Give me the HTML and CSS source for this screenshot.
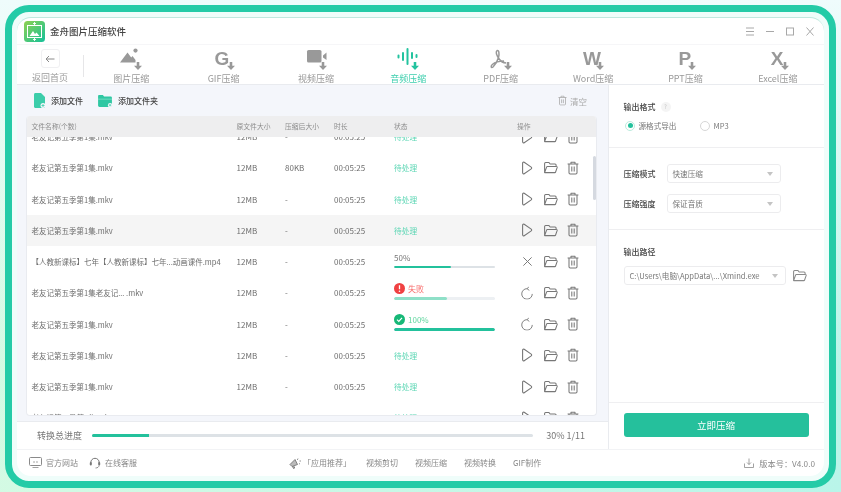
FILE: index.html
```html
<!DOCTYPE html>
<html lang="zh-CN">
<head>
<meta charset="utf-8">
<title>金舟图片压缩软件</title>
<link rel="stylesheet" href="styles.css">
</head>
<body>
<svg class="defs" width="0" height="0">
  <symbol id="arrow" viewBox="0 0 10 10"><path d="M3.4 0h3.2v4.6H10L5 10 0 4.6h3.4z"/></symbol>
  <symbol id="play" viewBox="0 0 12 14"><path d="M1.6 2.2c0-.9.9-1.4 1.6-.9l7 4.8c.6.4.6 1.3 0 1.8l-7 4.8c-.7.5-1.6 0-1.6-.9z" fill="none" stroke="currentColor" stroke-width="1.1"/></symbol>
  <symbol id="folder" viewBox="0 0 15 13"><path d="M1.6 11.6V2.4c0-.6.4-1 1-1h3.2l1.3 1.6h5c.6 0 1 .4 1 1v1.4M1.6 11.6h10.2c.4 0 .7-.2.8-.6l1.6-4.6c.1-.5-.2-.9-.7-.9H4.4c-.4 0-.7.2-.8.6z" fill="none" stroke="currentColor" stroke-width="1.05" stroke-linejoin="round"/></symbol>
  <symbol id="trash" viewBox="0 0 12 14"><path d="M.6 3h10.8M4 3V1.2h4V3M2 3v8.8c0 .7.5 1.2 1.2 1.2h5.600c.7 0 1.200-.5 1.200-1.200V3M4.800 5.500v5M7.200 5.500v5" fill="none" stroke="currentColor" stroke-width="1.05" stroke-linejoin="round"/></symbol>
  <symbol id="retry" viewBox="0 0 13 14"><path d="M6.500 2.300a5.700 5.700 0 1 0 5.700 5.700M6.500 2.300 8.600.3M6.500 2.300l2.500 1.900" fill="none" stroke="currentColor" stroke-width="1"/></symbol>
  <symbol id="cross" viewBox="0 0 12 12"><path d="M1.500 1.500l9 9M10.500 1.500l-9 9" fill="none" stroke="currentColor" stroke-width="1.05"/></symbol>
</svg>

<div class="frame">
<div class="window">

  <header class="titlebar">
    <svg class="logo" viewBox="0 0 21 21"><defs><linearGradient id="lg" x1="0" y1="0" x2="1" y2="1"><stop offset="0" stop-color="#8fd14f"/><stop offset="1" stop-color="#14c19b"/></linearGradient></defs><rect width="21" height="21" rx="3.500" fill="url(#lg)"/><rect x="3.500" y="4.500" width="14" height="12" fill="none" stroke="#fff" stroke-width="1"/><path d="M5.500 15l3.500-5 2 3 1.500-1.500L15.500 15z" fill="#fff"/><path d="M10.500 1v3M10.500 17v3M9 2.500h3M9 18.500h3" stroke="#fff" stroke-width=".9"/></svg>
    <span class="app-name">金舟图片压缩软件</span>
    <div class="win-ctrls">
      <svg width="10" height="9" viewBox="0 0 10 9"><path d="M1 1h8M1 4.500h8M1 8h8" stroke="#a8a8a8" fill="none"/></svg>
      <svg width="10" height="9" viewBox="0 0 10 9"><path d="M1 4.500h8" stroke="#a8a8a8" fill="none"/></svg>
      <svg width="10" height="9" viewBox="0 0 10 9"><rect x="1.500" y="1" width="7" height="7" stroke="#a8a8a8" fill="none"/></svg>
      <svg width="10" height="9" viewBox="0 0 10 9"><path d="M1.500 .5l7 8M8.500 .5l-7 8" stroke="#a8a8a8" fill="none"/></svg>
    </div>
  </header>

  <nav class="navbar">
    <div class="back">
      <span class="back-btn"><svg width="10" height="8" viewBox="0 0 10 8"><path d="M9.500 4H1M4 1 1 4l3 3" stroke="#8a8a8a" fill="none"/></svg></span>
      <span class="back-label">返回首页</span>
    </div>
    <i class="nav-divider"></i>
    <div class="tabs">
      <div class="tab">
        <span class="tab-icon"><svg class="glyph" width="24" height="22" viewBox="0 0 24 22"><circle cx="16.500" cy="2.600" r="2.100"/><path d="M1 14.500 8.500 4.500l3.700 5 1.300-1.600 3 4.100v2.500z"/></svg><svg class="tab-arrow" viewBox="0 0 10 10"><use href="#arrow"/></svg></span>
        <span>图片压缩</span>
      </div>
      <div class="tab">
        <span class="tab-icon"><span class="letter letter-g">G</span><svg class="tab-arrow" viewBox="0 0 10 10"><use href="#arrow"/></svg></span>
        <span>GIF压缩</span>
      </div>
      <div class="tab">
        <span class="tab-icon"><svg class="glyph" width="24" height="22" viewBox="0 0 24 22"><rect x="3" y="2" width="14.500" height="12.500" rx="1.600"/><path d="M19 7.500l3.500-3v7.500L19 9.500z"/></svg><svg class="tab-arrow" viewBox="0 0 10 10"><use href="#arrow"/></svg></span>
        <span>视频压缩</span>
      </div>
      <div class="tab tab-active">
        <span class="tab-icon"><svg class="glyph" width="24" height="22" viewBox="0 0 24 22"><path d="M2.500 7.500v2M7 5v7M11.500 1v15M16 5v5M20.500 7v2" fill="none" stroke="#23c39f" stroke-width="2" stroke-linecap="round"/></svg><svg class="tab-arrow" viewBox="0 0 10 10"><use href="#arrow"/></svg></span>
        <span>音频压缩</span>
      </div>
      <div class="tab">
        <span class="tab-icon"><svg class="glyph" width="24" height="22" viewBox="0 0 24 22"><path d="M8 2.500C6.500 4 8 8 10.500 11.500c1.600 2.200 3.500 3.200 6.500 3.500M8 2.500c2-.5 2.500 3 1.500 7-1 3.500-3 7-5.500 9.500-1.800 1.500-2.700-.5-.7-2.500 3-2.500 7-3.500 11.700-3.500" fill="none" stroke="#999" stroke-width="1.500"/></svg><svg class="tab-arrow" viewBox="0 0 10 10"><use href="#arrow"/></svg></span>
        <span>PDF压缩</span>
      </div>
      <div class="tab">
        <span class="tab-icon"><span class="letter">W</span><svg class="tab-arrow" viewBox="0 0 10 10"><use href="#arrow"/></svg></span>
        <span>Word压缩</span>
      </div>
      <div class="tab">
        <span class="tab-icon"><span class="letter letter-p">P</span><svg class="tab-arrow" viewBox="0 0 10 10"><use href="#arrow"/></svg></span>
        <span>PPT压缩</span>
      </div>
      <div class="tab">
        <span class="tab-icon"><span class="letter letter-p">X</span><svg class="tab-arrow" viewBox="0 0 10 10"><use href="#arrow"/></svg></span>
        <span>Excel压缩</span>
      </div>
    </div>
  </nav>

  <main class="main">
    <section class="left">
      <div class="toolbar">
        <button class="tool">
          <svg width="11" height="15" viewBox="0 0 11 15"><path d="M0 1.500C0 .7.600 0 1.500 0H7l4 4v9.500c0 .8-.600 1.500-1.500 1.500h-8C.600 15 0 14.300 0 13.500z" fill="#3ccdaa"/><circle cx="9" cy="12.500" r="2.500" fill="#f4f6fb"/><path d="M9 11v3M7.500 12.500h3" stroke="#3ccdaa" stroke-width=".8"/></svg>
          添加文件
        </button>
        <button class="tool">
          <svg width="14" height="12" viewBox="0 0 15 13"><path d="M0 1.200C0 .5.500 0 1.200 0h4l1.300 1.600h7c.8 0 1.500.6 1.500 1.400v8.500c0 .8-.700 1.500-1.500 1.500H1.500C.700 13 0 12.300 0 11.500z" fill="#2fc7a3"/><path d="M0 4.500h15" stroke="#8be3cd" stroke-width=".8"/><circle cx="13" cy="11" r="2.300" fill="#f4f6fb"/><path d="M13 9.700v2.600M11.700 11h2.600" stroke="#3ccdaa" stroke-width=".8"/></svg>
          添加文件夹
        </button>
        <button class="clear">
          <svg class="ic-clear" viewBox="0 0 12 14"><use href="#trash"/></svg>
          清空
        </button>
      </div>

      <div class="table">
        <div class="thead row-grid">
          <span>文件名称(个数)</span><span>原文件大小</span><span>压缩后大小</span><span>时长</span><span>状态</span><span>操作</span>
        </div>
        <div class="tbody">
          <div class="rows">
            <div class="row row-grid"><span class="name">老友记第五季第1集.mkv</span><span>12MB</span><span>-</span><span>00:05:25</span><span class="pending">待处理</span><span class="ops"><svg viewBox="0 0 12 14"><use href="#play"/></svg><svg class="op-folder" viewBox="0 0 15 13"><use href="#folder"/></svg><svg class="op-trash" viewBox="0 0 12 14"><use href="#trash"/></svg></span></div>
            <div class="row row-grid"><span class="name">老友记第五季第1集.mkv</span><span>12MB</span><span>80KB</span><span>00:05:25</span><span class="pending">待处理</span><span class="ops"><svg viewBox="0 0 12 14"><use href="#play"/></svg><svg class="op-folder" viewBox="0 0 15 13"><use href="#folder"/></svg><svg class="op-trash" viewBox="0 0 12 14"><use href="#trash"/></svg></span></div>
            <div class="row row-grid"><span class="name">老友记第五季第1集.mkv</span><span>12MB</span><span>-</span><span>00:05:25</span><span class="pending">待处理</span><span class="ops"><svg viewBox="0 0 12 14"><use href="#play"/></svg><svg class="op-folder" viewBox="0 0 15 13"><use href="#folder"/></svg><svg class="op-trash" viewBox="0 0 12 14"><use href="#trash"/></svg></span></div>
            <div class="row row-grid row-hover"><span class="name">老友记第五季第1集.mkv</span><span>12MB</span><span>-</span><span>00:05:25</span><span class="pending">待处理</span><span class="ops"><svg viewBox="0 0 12 14"><use href="#play"/></svg><svg class="op-folder" viewBox="0 0 15 13"><use href="#folder"/></svg><svg class="op-trash" viewBox="0 0 12 14"><use href="#trash"/></svg></span></div>
            <div class="row row-grid"><span class="name">【人教新课标】七年【人教新课标】七年...动画课件.mp4</span><span>12MB</span><span>-</span><span>00:05:25</span>
              <span class="status"><span class="st-label">50%</span><span class="bar"><i class="fill" style="width:56%"></i></span></span>
              <span class="ops"><svg class="op-cross" viewBox="0 0 12 12"><use href="#cross"/></svg><svg class="op-folder" viewBox="0 0 15 13"><use href="#folder"/></svg><svg class="op-trash" viewBox="0 0 12 14"><use href="#trash"/></svg></span></div>
            <div class="row row-grid"><span class="name">老友记第五季第1集老友记... .mkv</span><span>12MB</span><span>-</span><span>00:05:25</span>
              <span class="status"><span class="st-label st-fail"><svg width="11" height="11" viewBox="0 0 11 11"><circle cx="5.500" cy="5.500" r="5.500" fill="#f04142"/><path d="M5.500 2.300v4" stroke="#fff" stroke-width="1.300"/><circle cx="5.500" cy="8.200" r=".8" fill="#fff"/></svg>失败</span><span class="bar bar-pale"><i class="fill fill-pale" style="width:52%"></i></span></span>
              <span class="ops"><svg viewBox="0 0 13 14"><use href="#retry"/></svg><svg class="op-folder" viewBox="0 0 15 13"><use href="#folder"/></svg><svg class="op-trash" viewBox="0 0 12 14"><use href="#trash"/></svg></span></div>
            <div class="row row-grid"><span class="name">老友记第五季第1集.mkv</span><span>12MB</span><span>-</span><span>00:05:25</span>
              <span class="status"><span class="st-label st-done"><svg width="11" height="11" viewBox="0 0 11 11"><circle cx="5.500" cy="5.500" r="5.500" fill="#16b877"/><path d="M3 5.600l1.800 1.800L8 3.900" stroke="#fff" stroke-width="1.200" fill="none"/></svg>100%</span><span class="bar"><i class="fill" style="width:100%"></i></span></span>
              <span class="ops"><svg viewBox="0 0 13 14"><use href="#retry"/></svg><svg class="op-folder" viewBox="0 0 15 13"><use href="#folder"/></svg><svg class="op-trash" viewBox="0 0 12 14"><use href="#trash"/></svg></span></div>
            <div class="row row-grid"><span class="name">老友记第五季第1集.mkv</span><span>12MB</span><span>-</span><span>00:05:25</span><span class="pending">待处理</span><span class="ops"><svg viewBox="0 0 12 14"><use href="#play"/></svg><svg class="op-folder" viewBox="0 0 15 13"><use href="#folder"/></svg><svg class="op-trash" viewBox="0 0 12 14"><use href="#trash"/></svg></span></div>
            <div class="row row-grid"><span class="name">老友记第五季第1集.mkv</span><span>12MB</span><span>-</span><span>00:05:25</span><span class="pending">待处理</span><span class="ops"><svg viewBox="0 0 12 14"><use href="#play"/></svg><svg class="op-folder" viewBox="0 0 15 13"><use href="#folder"/></svg><svg class="op-trash" viewBox="0 0 12 14"><use href="#trash"/></svg></span></div>
            <div class="row row-grid"><span class="name">老友记第五季第1集.mkv</span><span>12MB</span><span>-</span><span>00:05:25</span><span class="pending">待处理</span><span class="ops"><svg viewBox="0 0 12 14"><use href="#play"/></svg><svg class="op-folder" viewBox="0 0 15 13"><use href="#folder"/></svg><svg class="op-trash" viewBox="0 0 12 14"><use href="#trash"/></svg></span></div>
          </div>
          <i class="scrollbar"></i>
        </div>
      </div>

      <div class="total">
        <span class="total-label">转换总进度</span>
        <span class="total-bar"><i class="total-fill" style="width:13%"></i></span>
        <span class="total-num">30% 1/11</span>
      </div>
    </section>

    <aside class="panel">
      <div class="sec sec-format">
        <div class="sec-title">输出格式<span class="help">?</span></div>
        <div class="radios">
          <label class="radio"><i class="dot dot-on"></i>源格式导出</label>
          <label class="radio"><i class="dot"></i>MP3</label>
        </div>
      </div>
      <div class="sec sec-mode">
        <div class="field"><span class="sec-title">压缩模式</span><span class="select select-short">快速压缩<i class="caret"></i></span></div>
        <div class="field"><span class="sec-title">压缩强度</span><span class="select select-short">保证音质<i class="caret"></i></span></div>
      </div>
      <div class="sec sec-path">
        <div class="sec-title">输出路径</div>
        <div class="path-row">
          <span class="select select-path">C:\Users\电脑\AppData\...\Xmind.exe<i class="caret"></i></span>
          <svg class="path-folder" viewBox="0 0 15 13"><use href="#folder"/></svg>
        </div>
      </div>
      <div class="sec-action"><button class="go">立即压缩</button></div>
    </aside>
  </main>

  <footer class="footer">
    <div class="foot-links">
      <span class="foot-item"><svg width="13" height="11" viewBox="0 0 13 11"><rect x=".5" y=".5" width="12" height="8" rx="1" fill="none" stroke="#8a8a8a"/><path d="M3.500 10.500h6M5.500 4.500l-1 .5 1 .5M7.500 4.500l1 .5-1 .5" fill="none" stroke="#8a8a8a" stroke-width=".8"/></svg>官方网站</span>
      <span class="foot-item"><svg width="12" height="12" viewBox="0 0 12 12"><path d="M1.800 7V5.500a4.200 4.200 0 0 1 8.400 0V7" fill="none" stroke="#777" stroke-width="1"/><rect x=".8" y="5" width="2" height="3.500" rx="1" fill="#777"/><rect x="9.200" y="5" width="2" height="3.500" rx="1" fill="#777"/><path d="M10 8.500c0 1.500-1.500 2.500-3.500 2.500" fill="none" stroke="#777" stroke-width=".8"/></svg>在线客服</span>
    </div>
    <div class="foot-apps">
      <span class="foot-rec"><svg width="13" height="12" viewBox="0 0 13 12"><path d="M1 7.500 6 2.500l2.500 5L3 9.500z M3.500 9.500l1 2 1.200-.500-.8-1.800" fill="#bbb" stroke="#777" stroke-width=".9"/><path d="M9 1.500 8.300 3M10.500 4H12M10 6.500l1 .5" stroke="#777" stroke-width=".8"/></svg>「应用推荐」</span>
      <span>视频剪切</span><span>视频压缩</span><span>视频转换</span><span>GIF制作</span>
    </div>
    <div class="foot-ver">
      <svg width="10" height="10" viewBox="0 0 10 10"><path d="M5 .5v6M3 4.500l2 2 2-2M.5 5.500v4h9v-4" fill="none" stroke="#8a8a8a" stroke-width=".8"/></svg>
      版本号：V4.0.0
    </div>
  </footer>

</div>
</div>
</body>
</html>
```

FILE: styles.css
```css
* { box-sizing: border-box; margin: 0; padding: 0; }
html, body { width: 841px; height: 492px; overflow: hidden; }
body {
  font-family: "Noto Sans CJK SC", "Noto Sans", sans-serif;
  font-size: 8px;
  color: #777;
  background-image: linear-gradient(180deg, #effcfc 0%, rgba(239,252,252,0) 75%), linear-gradient(100deg, #d6fbe3, #b9f5e9);
  padding: 5px 5px 4.5px 5px;
}
.defs { position: absolute; }
button { font: inherit; border: 0; background: none; color: inherit; }

.frame {
  height: 100%;
  border: 7px solid #24cba7;
  border-radius: 24px;
  background: #effdfa;
  padding: 5px;
  filter: blur(.4px);
}
.window {
  height: 100%;
  background: #fff;
  border-radius: 14px;
  border-top: 1px solid #bfe9df;
  display: flex;
  flex-direction: column;
  overflow: hidden;
}

/* title bar */
.titlebar {
  height: 27px;
  display: flex;
  align-items: center;
  padding: 0 9px 0 7px;
  border-bottom: 1px solid #f6f6f8;
  flex: none;
}
.logo { width: 21px; height: 21px; }
.app-name { font-size: 9.5px; font-weight: 500; color: #444; margin-left: 5px; }
.win-ctrls { margin-left: auto; display: flex; gap: 10px; }

/* nav */
.navbar {
  height: 40px;
  display: flex;
  flex: none;
  border-bottom: 1px solid #e9ebef;
}
.back { width: 66px; display: flex; flex-direction: column; align-items: center; padding-top: 4px; }
.back-btn {
  width: 19px; height: 19px;
  border: 1px solid #f0f0f2;
  border-radius: 3px;
  display: flex; align-items: center; justify-content: center;
}
.back-label { font-size: 9px; line-height: 13px; color: #999; margin-top: 3px; }
.nav-divider { width: 1px; height: 22px; background: #e6e6e8; margin-top: 10px; }
.tabs { flex: 1; display: grid; grid-template-columns: repeat(8, 1fr); margin-left: 1px; }
.tab { display: flex; flex-direction: column; align-items: center; font-size: 9px; line-height: 13px; color: #999; }
.tab-active { color: #3fcfae; }
.tab-icon { position: relative; width: 24px; height: 22px; margin-top: 3px; margin-bottom: 2px; display: block; }
.glyph { display: block; fill: #999; }
.tab-arrow { position: absolute; right: 1px; bottom: 0; width: 8px; height: 8px; fill: #999; }
.tab-active .tab-arrow { fill: #23c39f; }
.letter {
  position: absolute; left: 2px; top: 1px;
  font-family: "Liberation Sans", sans-serif;
  font-size: 19px; line-height: 19px;
  font-weight: 700; color: #999;
}
.letter-g { left: 3px; }
.letter-p { left: 5px; }

/* main */
.main { flex: 1; min-height: 0; display: flex; }
.left { width: 591px; background: #f4f6fb; display: flex; flex-direction: column; }
.toolbar { height: 31px; display: flex; align-items: center; padding: 0 21px 0 17px; flex: none; }
.tool { display: flex; align-items: center; gap: 6px; font-weight: 500; color: #444; margin-right: 15px; }
.clear { margin-left: auto; display: flex; align-items: center; gap: 3px; color: #aaa; font-size: 8.5px; }
.ic-clear { width: 9px; height: 11px; color: #aaa; }

.table {
  height: 300px;
  margin: 0 11px 0 9px;
  border-radius: 4px;
  background: #fff;
  border: 1px solid #e9ebf0;
  border-top: 0;
  display: flex;
  flex-direction: column;
  overflow: hidden;
  flex: none;
}
.row-grid {
  display: grid;
  grid-template-columns: 205px 48.500px 49px 60px 123px 1fr;
  padding-left: 4.500px;
  align-items: center;
}
.thead { height: 20.500px; background: #eeeeef; font-size: 6.8px; color: #8c8c8c; flex: none; }
.tbody { position: relative; flex: 1; overflow: hidden; }
.rows { margin-top: -15.500px; }
.row { height: 31.250px; color: #6e6e6e; }
.row-hover { background: #f5f5f5; }
.name { font-size: 7.5px; white-space: nowrap; }
.pending { color: #5cd6b4; font-size: 7.7px; }
.ops { display: flex; align-items: center; color: #777; padding-left: 4px; }
.ops svg { width: 12px; height: 14px; }
.ops svg.op-cross { width: 11px; height: 11px; margin: 0 .5px; }
.ops svg.op-folder { width: 15px; height: 13px; margin-left: 10px; }
.ops svg.op-trash { width: 12px; height: 14px; margin-left: 9px; }
.status { display: flex; flex-direction: column; width: 101px; }
.st-label { display: flex; align-items: center; gap: 3px; height: 11px; line-height: 11px; margin-top: -3px; color: #777; }
.st-fail { color: #f8706f; }
.st-done { color: #62d6a0; }
.bar { display: block; height: 2.500px; margin-top: 3px; background: #dde2e6; border-radius: 2px; overflow: hidden; }
.bar-pale { background: #edf0f3; }
.fill { display: block; height: 100%; background: #23c19c; border-radius: 2px; }
.fill-pale { background: #8fe0c8; }
.scrollbar { position: absolute; left: 566px; top: 19.500px; width: 3px; height: 44px; border-radius: 2px; background: #d5d9e0; }

.total {
  flex: 1;
  margin-top: 5px;
  background: #fff;
  border-top: 1px solid #e9ebef;
  display: flex;
  align-items: center;
  padding: 0 23px 0 20px;
}
.total-label { font-size: 9px; color: #777; width: 55px; flex: none; }
.total-bar { flex: 1; height: 2.500px; background: #dde2e6; display: block; border-radius: 2px; overflow: hidden; }
.total-fill { display: block; height: 100%; background: #23c19c; }
.total-num { font-size: 9px; color: #777; margin-left: 13px; }

/* right panel */
.panel { flex: 1; display: flex; flex-direction: column; border-left: 1px solid #e9ebef; background: #fff; }
.sec { border-bottom: 1.500px solid #efeff1; padding-left: 14.500px; flex: none; }
.sec-title { font-weight: 500; color: #444; display: flex; align-items: center; }
.sec-format { height: 63px; padding-top: 15px; }
.sec-format .sec-title { height: 13px; }
.help { width: 10px; height: 10px; border-radius: 50%; background: #f4f4f4; color: #c4c4c4; font-size: 6px; font-weight: 400; display: flex; align-items: center; justify-content: center; margin-left: 5px; }
.radios { display: flex; gap: 22px; margin-top: 7px; }
.radio { display: flex; align-items: center; gap: 3.500px; height: 11px; color: #777; font-size: 7.600px; }
.dot { width: 10px; height: 10px; border-radius: 50%; border: 1px solid #d6d6d6; background: #fff; display: block; position: relative; margin-left: 1.500px; }
.dot-on { border-color: #bcebdd; }
.dot-on::after { content: ""; position: absolute; left: 1.500px; top: 1.500px; width: 5px; height: 5px; border-radius: 50%; background: #23c19c; }
.sec-mode { height: 82px; padding-top: 16px; display: flex; flex-direction: column; gap: 11px; }
.field { display: flex; align-items: center; gap: 11px; }
.select {
  height: 19px;
  border: 1px solid #ececee;
  border-radius: 3px;
  background: #fff;
  display: flex;
  align-items: center;
  padding-left: 5px;
  color: #777;
  font-size: 7.600px;
  position: relative;
}
.select-short { width: 114px; }
.caret { position: absolute; right: 7px; top: 7px; width: 0; height: 0; border: 3.500px solid transparent; border-top: 4px solid #c4c4c4; border-bottom: 0; }
.sec-path { height: 173px; padding-top: 15px; }
.sec-path .sec-title { height: 13px; }
.path-row { display: flex; align-items: center; gap: 6px; margin-top: 8px; }
.select-path { width: 162px; }
.path-folder { width: 15px; height: 13px; color: #8a8a8a; }
.sec-action { flex: 1; padding: 10px 15.500px 0 14.500px; }
.go { width: 185px; height: 24px; border-radius: 3px; background: #25c09c; color: #fff; font-size: 9.500px; }

/* footer */
.footer {
  height: 27px;
  flex: none;
  display: flex;
  align-items: center;
  border-top: 1px solid #f2f3f5;
  padding: 0 9px 0 12px;
  color: #888;
}
.foot-links { display: flex; gap: 11px; width: 260px; }
.foot-item { display: flex; align-items: center; gap: 4px; }
.foot-apps { display: flex; gap: 17px; align-items: center; }
.foot-rec { display: flex; align-items: center; gap: 1px; margin-right: -2px; }
.foot-ver { margin-left: auto; display: flex; align-items: center; gap: 5px; font-size: 8.200px; }
```
